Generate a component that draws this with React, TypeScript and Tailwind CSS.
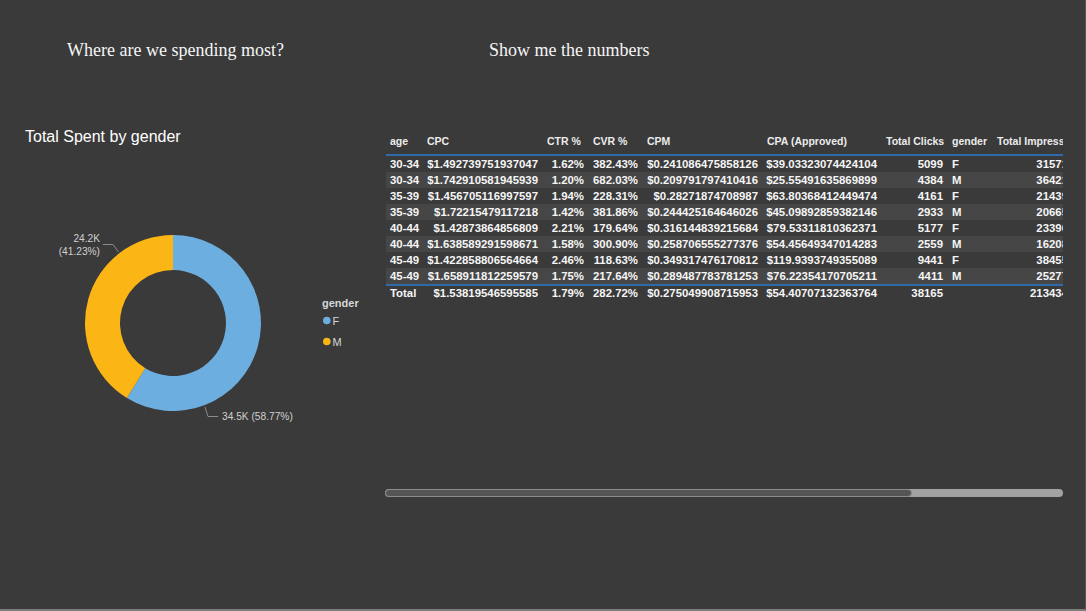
const COLS = [
  { label: "age", w: "w-[37px]", align: "text-left" },
  { label: "CPC", w: "w-[120px]", align: "text-right" },
  { label: "CTR %", w: "w-[46px]", align: "text-right" },
  { label: "CVR %", w: "w-[54px]", align: "text-right" },
  { label: "CPM", w: "w-[120px]", align: "text-right" },
  { label: "CPA (Approved)", w: "w-[119px]", align: "text-right" },
  { label: "Total Clicks", w: "w-[66px]", align: "text-right" },
  { label: "gender", w: "w-[45px]", align: "text-left" },
  { label: "Total Impressions", w: "w-[80px]", align: "text-right" },
];

const ROWS = [
  ["30-34", "$1.492739751937047", "1.62%", "382.43%", "$0.241086475858126", "$39.03323074424104", "5099", "F", "31571"],
  ["30-34", "$1.742910581945939", "1.20%", "682.03%", "$0.209791797410416", "$25.55491635869899", "4384", "M", "36421"],
  ["35-39", "$1.456705116997597", "1.94%", "228.31%", "$0.28271874708987", "$63.80368412449474", "4161", "F", "21439"],
  ["35-39", "$1.72215479117218", "1.42%", "381.86%", "$0.244425164646026", "$45.09892859382146", "2933", "M", "20665"],
  ["40-44", "$1.42873864856809", "2.21%", "179.64%", "$0.316144839215684", "$79.53311810362371", "5177", "F", "23396"],
  ["40-44", "$1.638589291598671", "1.58%", "300.90%", "$0.258706555277376", "$54.45649347014283", "2559", "M", "16208"],
  ["45-49", "$1.422858806564664", "2.46%", "118.63%", "$0.349317476170812", "$119.9393749355089", "9441", "F", "38455"],
  ["45-49", "$1.658911812259579", "1.75%", "217.64%", "$0.289487783781253", "$76.22354170705211", "4411", "M", "25277"],
];

const TOTAL = ["Total", "$1.53819546595585", "1.79%", "282.72%", "$0.275049908715953", "$54.40707132363764", "38165", "", "213434"];

function Donut() {
  // page coordinates via viewBox offset
  return (
    <svg width="380" height="300" viewBox="0 147 380 300" className="block">
      <path
        d="M173 235 A88 88 0 1 1 126.92 397.98 L145.25 368.16 A53 53 0 1 0 173 270 Z"
        fill="#6daee0"
      />
      <path
        d="M126.92 397.98 A88 88 0 0 1 173 235 L173 270 A53 53 0 0 0 145.25 368.16 Z"
        fill="#fbb514"
      />
      <path d="M103 244.5 L113 244.5 L118.5 252" fill="none" stroke="#8a8a8a" strokeWidth="1" />
      <path d="M205 407 L208 416.5 L218 416.5" fill="none" stroke="#8a8a8a" strokeWidth="1" />
      <g fontFamily="'Liberation Sans', Arial, sans-serif" fontSize="10.2" fill="#cfcfcf">
        <text x="100" y="241.5" textAnchor="end">24.2K</text>
        <text x="100" y="254.5" textAnchor="end">(41.23%)</text>
        <text x="222" y="420">34.5K (58.77%)</text>
      </g>
      <g fontFamily="'Liberation Sans', Arial, sans-serif" fill="#d6d6d6">
        <text x="322" y="307" fontSize="11" fontWeight="bold">gender</text>
        <circle cx="326.8" cy="320.5" r="3.8" fill="#6daee0" />
        <text x="332.5" y="324.5" fontSize="11">F</text>
        <circle cx="326.8" cy="341.5" r="3.8" fill="#fbb514" />
        <text x="332.5" y="345.5" fontSize="11">M</text>
      </g>
    </svg>
  );
}

export default function App() {
  return (
    <div className="w-[1086px] h-[611px] bg-[#3a3a3a] overflow-hidden flex flex-col border-b-2 border-r border-b-[#7c7c7c] border-r-[#555555] font-['Liberation_Sans',Arial,sans-serif]">
      <div className="flex h-[120px] pt-[40px] font-['Liberation_Serif','Times_New_Roman',serif] text-[18px] leading-[20px] text-[#f5f5f5]">
        <div className="w-[489px] pl-[67px]">Where are we spending most?</div>
        <div>Show me the numbers</div>
      </div>

      <div className="flex">
        <div className="w-[380px] pt-[7px]">
          <div className="pl-[25px] text-[16px] leading-[20px] text-white">Total Spent by gender</div>
          <Donut />
        </div>

        <div className="ml-[6px] pt-[11px]">
          <div className="w-[677px] h-[352px] overflow-hidden">
            <table className="table-fixed border-separate border-spacing-0 w-[687px] text-[11.4px] font-bold text-[#f5f5f5]">
              <thead>
                <tr>
                  {COLS.map((c) => (
                    <th
                      key={c.label}
                      className={`${c.w} h-[25px] align-top pt-[3px] pl-[4px] text-left whitespace-nowrap leading-[14px] text-[10.5px] text-[#ececec] border-b-2 border-[#2f6ba8]`}
                    >
                      {c.label}
                    </th>
                  ))}
                </tr>
              </thead>
              <tbody>
                {ROWS.map((r, i) => (
                  <tr key={i} className={i % 2 === 1 ? "bg-[#464646]" : ""}>
                    {r.map((v, j) => (
                      <td
                        key={j}
                        className={`h-[16px] leading-[14px] py-0 whitespace-nowrap ${COLS[j].align} ${
                          COLS[j].align === "text-left" ? "pl-[4px]" : "pr-[5px]"
                        }`}
                      >
                        {v}
                      </td>
                    ))}
                  </tr>
                ))}
                <tr>
                  {TOTAL.map((v, j) => (
                    <td
                      key={j}
                      className={`h-[18px] leading-[14px] align-top pt-0 whitespace-nowrap border-t-2 border-[#2f6ba8] ${COLS[j].align} ${
                        COLS[j].align === "text-left" ? "pl-[4px]" : "pr-[5px]"
                      }`}
                    >
                      {v}
                    </td>
                  ))}
                </tr>
              </tbody>
            </table>
          </div>
          <div className="mt-[6px] w-[678px] h-[8px] rounded-full bg-[#a2a2a2] -ml-[1px] flex">
            <div className="w-[527px] h-[8px] rounded-full bg-[#555555] border border-[#8c8c8c]" />
          </div>
        </div>
      </div>
    </div>
  );
}
